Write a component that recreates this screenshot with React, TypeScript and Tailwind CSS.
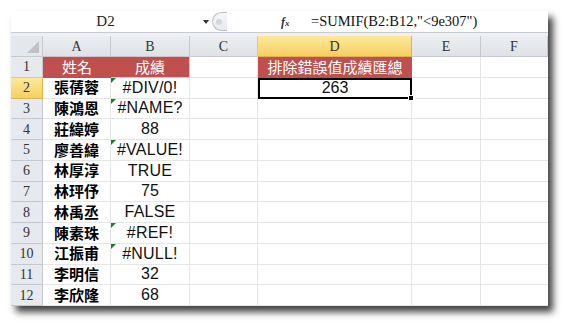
import React from "react";

const COLS = ["w-[32px]", "w-[68px]", "w-[79px]", "w-[68px]", "w-[154px]", "w-[69px]", "w-[67px]"];

const names = ["張蒨蓉", "陳鴻恩", "莊緯婷", "廖善緯", "林厚淳", "林玶伃", "林禹丞", "陳素珠", "江振甫", "李明信", "李欣隆"];
const vals = ["#DIV/0!", "#NAME?", "88", "#VALUE!", "TRUE", "75", "FALSE", "#REF!", "#NULL!", "32", "68"];
const flagged = [true, true, false, true, false, false, false, true, true, false, false];

const cjk = { fontFamily: '"Noto Sans CJK TC", "Noto Sans", sans-serif' };
const num = { fontFamily: '"Liberation Sans", Arial, sans-serif' };
const serif = { fontFamily: '"Liberation Serif", "DejaVu Serif", serif' };

function Tri() {
  return (
    <span className="absolute left-0 top-0 w-0 h-0 border-t-[5px] border-r-[5px] border-t-[#1c7c2c] border-r-transparent" />
  );
}

export default function App() {
  return (
    <div className="w-[567px] h-[326px] bg-white pt-[11px] pl-[11px]">
      <div className="w-[537px] h-[295px] overflow-hidden bg-white shadow-[5px_6px_7px_rgba(0,0,0,0.75)] flex flex-col">
        {/* formula bar */}
        <div className="h-[21px] flex items-center bg-white shrink-0">
          <div className="w-[189px] text-center text-[15px] text-[#222]" style={serif}>D2</div>
          <div className="w-[12px] flex justify-center">
            <span className="w-0 h-0 border-l-[3px] border-r-[3px] border-t-[4px] border-l-transparent border-r-transparent border-t-[#333]" />
          </div>
          <div className="w-[15px] h-[19px] rounded-l-full border border-r-0 border-[#b9bec6] bg-gradient-to-b from-[#f6f7f9] to-[#e6e9ed] flex items-center pl-[3px]">
            <span className="w-[6px] h-[6px] rounded-full bg-[#d3d7dc]" />
          </div>
          <div className="w-[54px]" />
          <div className="w-[14px] text-[12px] italic font-bold text-[#333]" style={serif}>f<span className="text-[9px]">x</span></div>
          <div className="flex-1 pl-[16px] text-[14.5px] text-[#111]" style={serif}>=SUMIF(B2:B12,"&lt;9e307")</div>
        </div>
        <div className="h-[4px] shrink-0 border-t border-[#c8ccd2] bg-[#eef0f3]" />
        {/* header row */}
        <div className="flex h-[21px] shrink-0">
          <div className={`${COLS[0]} relative bg-[#e4e7eb] border-r border-b border-[#c5c9cf]`}>
            <span className="absolute right-[3px] bottom-[3px] w-0 h-0 border-b-[12px] border-l-[12px] border-b-[#bfc3c9] border-l-transparent" />
          </div>
          {["A", "B", "C", "D", "E", "F"].map((c, i) => (
            <div
              key={c}
              className={`${COLS[i + 1]} flex items-center justify-center text-[14px] border-r border-b ${
                c === "D"
                  ? "bg-gradient-to-b from-[#fde99c] to-[#f6cf5f] border-[#e2b24b] text-[#333]"
                  : "bg-gradient-to-b from-[#eceef1] to-[#dee2e7] border-[#c5c9cf] text-[#333]"
              }`}
              style={serif}
            >
              {c}
            </div>
          ))}
        </div>
        {/* row 1 */}
        <div className="flex h-[20.75px] shrink-0">
          <div className={`${COLS[0]} flex items-center justify-center bg-[#e6e9ed] border-r border-b border-[#c5c9cf] text-[14px] text-[#333]`} style={serif}>1</div>
          <div className={`${COLS[1]} flex items-center justify-center bg-[#c0504d] text-white text-[15px] border-b border-[#c0504d]`} style={cjk}>姓名</div>
          <div className={`${COLS[2]} flex items-center justify-center bg-[#c0504d] text-white text-[15px] border-r border-b border-[#c9c9c9]`} style={cjk}>成績</div>
          <div className={`${COLS[3]} border-r border-b border-[#e6e6e6]`} />
          <div className={`${COLS[4]} flex items-center justify-center bg-[#c0504d] text-white text-[15px] border-b border-[#c0504d]`} style={cjk}>排除錯誤值成績匯總</div>
          <div className={`${COLS[5]} border-r border-b border-[#e6e6e6]`} />
          <div className={`${COLS[6]} border-b border-[#e6e6e6]`} />
        </div>
        {names.map((n, i) => {
          const r = i + 2;
          return (
            <div key={r} className="flex h-[20.75px] shrink-0">
              <div
                className={`${COLS[0]} flex items-center justify-center border-r border-b text-[14px] ${
                  r === 2 ? "bg-gradient-to-b from-[#fde99c] to-[#f6cf5f] border-[#e2b24b] text-[#333]" : "bg-[#e6e9ed] border-[#c5c9cf] text-[#333]"
                }`}
                style={serif}
              >
                {r}
              </div>
              <div className={`${COLS[1]} flex items-center justify-center border-r border-b border-[#e6e6e6] text-[15px] font-semibold text-black`} style={cjk}>{n}</div>
              <div className={`${COLS[2]} relative flex items-center justify-center border-r border-b border-[#e6e6e6] text-[16px] tracking-[0.2px] text-[#111]`} style={num}>
                {flagged[i] && <Tri />}
                {vals[i]}
              </div>
              <div className={`${COLS[3]} border-r border-b border-[#e6e6e6]`} />
              {r === 2 ? (
                <div className={`${COLS[4]} relative flex items-center justify-center border-2 border-black text-[16px] text-[#111]`} style={num}>
                  263
                  <span className="absolute -right-[4px] -bottom-[4px] w-[6px] h-[6px] bg-black border border-white" />
                </div>
              ) : (
                <div className={`${COLS[4]} border-r border-b border-[#e6e6e6]`} />
              )}
              <div className={`${COLS[5]} border-r border-b border-[#e6e6e6]`} />
              <div className={`${COLS[6]} border-b border-[#e6e6e6]`} />
            </div>
          );
        })}
      </div>
    </div>
  );
}
